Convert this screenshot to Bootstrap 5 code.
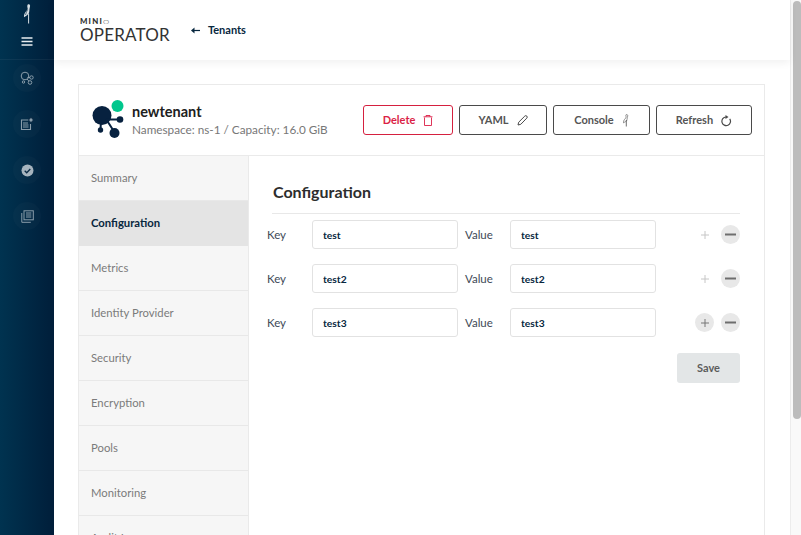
<!DOCTYPE html>
<html lang="en">
<head>
<meta charset="utf-8">
<title>Operator</title>
<link href="https://cdn.jsdelivr.net/npm/bootstrap@5.3.0/dist/css/bootstrap.min.css" rel="stylesheet">
<style>
html,body{height:535px;overflow:hidden}
body{font-family:"Lato","Liberation Sans",sans-serif;background:#fff;color:#393939}
.shell{height:535px}
.side{width:54px;flex:none;background:linear-gradient(90deg,#003350,#001e3a)}
.side-top{height:60px;flex:none;padding-top:4px;border-bottom:1px solid #ffffff0d}
.side-nav{gap:18px;margin-top:4px}
.ring{width:28px;height:28px;border-radius:50%;background:#ffffff05}
.main-col{min-width:0}
.topbar{height:60px;flex:none;box-shadow:0 3px 8px #0000000f;padding-left:26px;z-index:1}
.back-link{color:#07273e;font-size:11px;font-weight:700;margin-left:21px;margin-top:1px;text-decoration:none;gap:8px}
.brand-mini{font-size:6.5px;line-height:7px;font-weight:900;letter-spacing:1px;color:#2e2e2e;transform:scaleX(1.2);transform-origin:left center}
.brand-mini b{font-weight:300}
.brand-main{font-size:17px;line-height:17px;color:#333;font-weight:400;letter-spacing:.2px;margin-top:1px}
.content{padding:24px 0 0 24px}
.tenant{width:687px;border:1px solid #eaeaea;border-bottom:0;height:460px}
.tenant-head{height:71px;flex:none;border-bottom:1px solid #eaeaea;padding:0 12px 0 13px}
.tenant-logo{overflow:visible}
.tenant-name{font-size:14.500px;font-weight:700;line-height:18px;color:#202020;margin-top:1px}
.tenant-sub{font-size:11.750px;line-height:17px;color:#777;margin-top:0}
.act{height:30px;font-size:11px;font-weight:700;border:1px solid #4a4a4a;border-radius:3px;background:#fff;color:#555;padding:1px 0 0;gap:8px;margin-left:6px}
.act:hover{background:#fff}
.act-del{color:#db1f47;width:90px;margin-left:0;border-color:#d5203f}
.act-yaml{width:88px}.act-con{width:97px}.act-ref{width:96px}
.tabs{width:170px;flex:none;background:#f6f6f6;border-right:1px solid #eaeaea}
.tab-row{height:45px;padding-left:12px;font-size:11.300px;color:#7b7b7b;border-bottom:1px solid #e8e8e8;flex:none}
.tab-row.on{background:#e4e4e4;color:#07273e;font-weight:700;border-bottom-color:#e4e4e4}
.panel-title{font-size:16px;font-weight:700;color:#2d2d2d;margin:26px 0 0 24px;line-height:20px}
.rule{margin:11px 24px 0 23px;height:1px;background:#e8e8e8}
.kv{height:29px;margin-bottom:15px;padding-left:18px;font-size:11.500px;color:#3e4a57}
.kv-first{margin-top:6px}
.lbl-k{width:45px;flex:none}
.lbl-v{width:45px;flex:none;margin-left:7px}
.txt{width:146px;height:29px;border:1px solid #e2e2e2;border-radius:3px;background:#fff;font-size:10.300px;font-weight:700;color:#07273e;padding:0 10px;font-family:inherit;box-shadow:none}
.rnd{width:19px;height:19px;border-radius:50%;background:#e8e8e8;flex:none;border:0;padding:0}
.rnd.off{background:transparent}
.ops{margin-left:auto;margin-right:24px;gap:7px}
.save-row{padding-top:1px}
.save{width:63px;height:30px;background:#e3e6e7;color:#5c5c5c;font-size:11px;font-weight:700;border:0;border-radius:3px;padding:0;margin-right:24px}
.save:hover{background:#e3e6e7;color:#5c5c5c}
.sbar{width:11px;flex:none;background:#f9f9f9;border-left:1px solid #ececec;padding:1px 0 0 2px}
.sthumb{width:8px;height:418px;background:#bcbcbc;border-radius:4px}
.menu-ico{margin-top:13px}
</style>
</head>
<body>
<div class="shell d-flex">
  <aside class="side d-flex flex-column text-center">
    <div class="side-top d-flex flex-column align-items-center">
      <svg width="12" height="20" viewBox="0 0 12 20"><path d="M6.800 .5c1.500-.6 2.600.4 2.200 1.900-.3 1.400-.7 2.900-.7 4.700 0 2.100-1 3.400-2.600 4.300L3 13.200c-.2-2.300.6-4.300 2.400-6.200 1-1 1.500-2 1.200-3C6.200 3.100 6.100 1.200 6.800.5z" fill="#d7dfe4"/><path d="M7.600 9.500V19.500" stroke="#d7dfe4" stroke-width="1"/><path d="M6.700 5.500c-.7 1.900-1.900 3.200-2.200 5.500" stroke="#1c3e55" stroke-width=".7" fill="none"/></svg>
      <svg class="menu-ico" width="12" height="9" viewBox="0 0 12 9"><path d="M.5 1h11M.5 4.500h11M.5 8h11" stroke="#e8edf0" stroke-width="1.300"/></svg>
    </div>
    <nav class="side-nav d-flex flex-column align-items-center">
      <div class="ring d-flex align-items-center justify-content-center"><svg width="14" height="14" viewBox="0 0 14 14" fill="none" stroke="#8a9daa" stroke-width="1"><circle cx="5" cy="5" r="3.800"/><circle cx="11.500" cy="6.500" r="1.700"/><circle cx="10" cy="11.500" r="1.800"/><circle cx="3.500" cy="11" r="1.200"/><path d="M7.500 6.500l2.500 0M7 8l1.800 2"/></svg></div>
      <div class="ring d-flex align-items-center justify-content-center"><svg width="14" height="14" viewBox="0 0 14 14" fill="none" stroke="#8a9daa" stroke-width="1.100"><path d="M9 3H1.500v9.500h9V7"/><path d="M3 6h5M3 8h5.500M3 10h5.500"/><circle cx="11" cy="3" r="2.200" fill="#8a9daa" stroke="#0a2a44"/></svg></div>
      <div class="ring d-flex align-items-center justify-content-center"><svg width="13" height="13" viewBox="0 0 13 13"><circle cx="6.500" cy="6.500" r="6" fill="#a6b4be"/><path d="M3.700 6.700l2 2 3.600-3.700" stroke="#0a2a44" stroke-width="1.300" fill="none"/></svg></div>
      <div class="ring d-flex align-items-center justify-content-center"><svg width="13" height="13" viewBox="0 0 13 13" fill="none" stroke="#8a9daa" stroke-width="1"><rect x="3" y=".8" width="9.300" height="9"/><path d="M5 3h5.300M5 5h5.300M5 7h5.300"/><path d="M.8 3v9.300h9"/></svg></div>
    </nav>
  </aside>
  <div class="main-col flex-grow-1 d-flex flex-column">
    <header class="topbar d-flex align-items-center bg-white position-relative">
      <div>
        <div class="brand-mini">MINI<b>O</b></div>
        <div class="brand-main">OPERATOR</div>
      </div>
      <a class="back-link d-flex align-items-center" href="#"><svg width="9" height="7" viewBox="0 0 9 7"><path d="M9 3.500H2" stroke="#07273e" stroke-width="1.200"/><path d="M3.500 .5L0 3.500l3.500 3z" fill="#07273e"/></svg>Tenants</a>
    </header>
    <main class="content flex-grow-1">
      <section class="tenant d-flex flex-column">
        <div class="tenant-head d-flex align-items-center">
          <svg class="tenant-logo" width="32" height="38" viewBox="0 1 32 38"><circle cx="25.500" cy="6" r="6" fill="#00c78d"/><circle cx="10" cy="15.500" r="9.500" fill="#07213f"/><path d="M14 19.500l14 0M14 19l9 14M9 20l-.5 10" stroke="#07213f" stroke-width="2"/><circle cx="28" cy="19.500" r="3.300" fill="#07213f"/><circle cx="22.500" cy="33" r="5" fill="#07213f"/><circle cx="8.500" cy="30" r="2.700" fill="#07213f"/></svg>
          <div class="ms-2">
            <div class="tenant-name">newtenant</div>
            <div class="tenant-sub">Namespace: ns-1 / Capacity: 16.0 GiB</div>
          </div>
          <div class="ms-auto d-flex">
            <button class="btn act act-del d-flex align-items-center justify-content-center" type="button">Delete <svg width="10" height="11" viewBox="0 0 10 11" fill="none" stroke="#db1f47" stroke-width=".9"><path d="M1.500 2.500v8h7v-8M.5 1.800h9M3 1.800V.5h4v1.300"/></svg></button>
            <button class="btn act act-yaml d-flex align-items-center justify-content-center" type="button">YAML <svg width="11" height="11" viewBox="0 0 11 11" fill="none" stroke="#4a4a4a"><path d="M1 10l.7-2.800L7.800 1.100a1.300 1.300 0 0 1 2 2L3.800 9.300z"/></svg></button>
            <button class="btn act act-con d-flex align-items-center justify-content-center" type="button">Console <svg width="7" height="13" viewBox="0 0 7 13"><path d="M4 .8c1-.5 2 0 1.700 1.300-.2 1-.6 2-.7 3.300 0 1.300-.8 2-2.200 2.600L1.500 8.800c-.2-1.500.5-3 2-4.500.6-.7.800-1.400.5-2C3.800 1.800 3.700 1.200 4 .8z" fill="none" stroke="#4a4a4a" stroke-width=".6"/><path d="M4.300 6v6.500" stroke="#4a4a4a" stroke-width=".8"/></svg></button>
            <button class="btn act act-ref d-flex align-items-center justify-content-center" type="button">Refresh <svg width="11" height="12" viewBox="0 0 11 12" fill="none" stroke="#4a4a4a" stroke-width="1.200"><path d="M8.700 3.800a4.300 4.300 0 1 1-3.700-1.800"/><path d="M4.500 0l3 2-3 2z" fill="#4a4a4a" stroke="none"/></svg></button>
          </div>
        </div>
        <div class="d-flex flex-grow-1 overflow-hidden">
          <div class="tabs d-flex flex-column">
            <div class="tab-row d-flex align-items-center">Summary</div>
            <div class="tab-row on d-flex align-items-center">Configuration</div>
            <div class="tab-row d-flex align-items-center">Metrics</div>
            <div class="tab-row d-flex align-items-center">Identity Provider</div>
            <div class="tab-row d-flex align-items-center">Security</div>
            <div class="tab-row d-flex align-items-center">Encryption</div>
            <div class="tab-row d-flex align-items-center">Pools</div>
            <div class="tab-row d-flex align-items-center">Monitoring</div>
            <div class="tab-row d-flex align-items-center">Audit Log</div>
          </div>
          <div class="flex-grow-1">
            <h2 class="panel-title">Configuration</h2>
            <div class="rule"></div>
            <div class="kv kv-first d-flex align-items-center">
              <span class="lbl-k">Key</span><input class="txt" value="test" aria-label="Key"><span class="lbl-v">Value</span><input class="txt" value="test" aria-label="Value">
              <div class="ops d-flex align-items-center"><button class="rnd off d-flex align-items-center justify-content-center" type="button" aria-label="Add"><svg width="8" height="8" viewBox="0 0 8 8"><path d="M4 0v8M0 4h8" stroke="#c6c6c6"/></svg></button><button class="rnd d-flex align-items-center justify-content-center" type="button" aria-label="Remove"><svg width="11" height="3" viewBox="0 0 11 3"><path d="M0 1.500h11" stroke="#6e6e6e" stroke-width="2"/></svg></button></div>
            </div>
            <div class="kv d-flex align-items-center">
              <span class="lbl-k">Key</span><input class="txt" value="test2" aria-label="Key"><span class="lbl-v">Value</span><input class="txt" value="test2" aria-label="Value">
              <div class="ops d-flex align-items-center"><button class="rnd off d-flex align-items-center justify-content-center" type="button" aria-label="Add"><svg width="8" height="8" viewBox="0 0 8 8"><path d="M4 0v8M0 4h8" stroke="#c6c6c6"/></svg></button><button class="rnd d-flex align-items-center justify-content-center" type="button" aria-label="Remove"><svg width="11" height="3" viewBox="0 0 11 3"><path d="M0 1.500h11" stroke="#6e6e6e" stroke-width="2"/></svg></button></div>
            </div>
            <div class="kv d-flex align-items-center">
              <span class="lbl-k">Key</span><input class="txt" value="test3" aria-label="Key"><span class="lbl-v">Value</span><input class="txt" value="test3" aria-label="Value">
              <div class="ops d-flex align-items-center"><button class="rnd d-flex align-items-center justify-content-center" type="button" aria-label="Add"><svg width="8" height="8" viewBox="0 0 8 8"><path d="M4 0v8M0 4h8" stroke="#777"/></svg></button><button class="rnd d-flex align-items-center justify-content-center" type="button" aria-label="Remove"><svg width="11" height="3" viewBox="0 0 11 3"><path d="M0 1.500h11" stroke="#6e6e6e" stroke-width="2"/></svg></button></div>
            </div>
            <div class="save-row d-flex justify-content-end"><button class="btn save" type="button">Save</button></div>
          </div>
        </div>
      </section>
    </main>
  </div>
  <div class="sbar"><div class="sthumb"></div></div>
</div>
<script src="https://cdn.jsdelivr.net/npm/bootstrap@5.3.0/dist/js/bootstrap.bundle.min.js"></script>
</body>
</html>
